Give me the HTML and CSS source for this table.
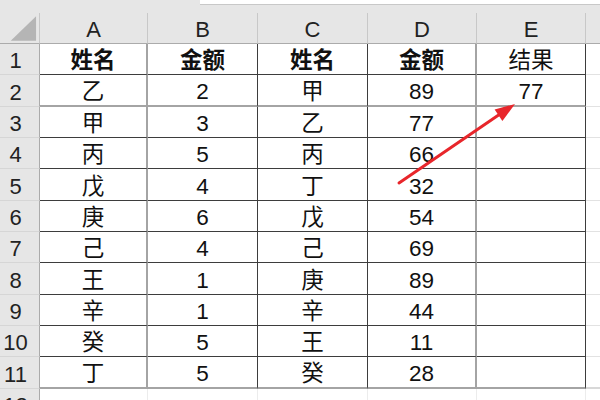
FILE: index.html
```html
<!DOCTYPE html>
<html lang="zh">
<head>
<meta charset="utf-8">
<link rel="stylesheet" href="styles.css">
</head>
<body>
<div class="page">
  <div class="topbar"><div class="formula"></div></div>
  <div class="sheet">
    <div class="corner"><svg width="40" height="31" viewBox="0 0 40 31"><polygon points="37,3 37,28 11,28" fill="#b5b5b5"/></svg></div>
    <div class="ch">A</div><div class="ch">B</div><div class="ch">C</div><div class="ch">D</div><div class="ch">E</div><div class="ch last"></div>

    <div class="rh">1</div><div class="c ca b">姓名</div><div class="c b">金额</div><div class="c b">姓名</div><div class="c cd b">金额</div><div class="c">结果</div><div class="x"></div>
    <div class="rh">2</div><div class="c ca r2">乙</div><div class="c r2">2</div><div class="c r2">甲</div><div class="c cd r2">89</div><div class="c r2">77</div><div class="x"></div>
    <div class="rh">3</div><div class="c ca">甲</div><div class="c">3</div><div class="c">乙</div><div class="c cd">77</div><div class="c"></div><div class="x"></div>
    <div class="rh">4</div><div class="c ca">丙</div><div class="c">5</div><div class="c">丙</div><div class="c cd">66</div><div class="c"></div><div class="x"></div>
    <div class="rh">5</div><div class="c ca">戊</div><div class="c">4</div><div class="c">丁</div><div class="c cd">32</div><div class="c"></div><div class="x"></div>
    <div class="rh">6</div><div class="c ca">庚</div><div class="c">6</div><div class="c">戊</div><div class="c cd">54</div><div class="c"></div><div class="x"></div>
    <div class="rh">7</div><div class="c ca">己</div><div class="c">4</div><div class="c">己</div><div class="c cd">69</div><div class="c"></div><div class="x"></div>
    <div class="rh">8</div><div class="c ca">王</div><div class="c">1</div><div class="c">庚</div><div class="c cd">89</div><div class="c"></div><div class="x"></div>
    <div class="rh">9</div><div class="c ca">辛</div><div class="c">1</div><div class="c">辛</div><div class="c cd">44</div><div class="c"></div><div class="x"></div>
    <div class="rh">10</div><div class="c ca">癸</div><div class="c">5</div><div class="c">王</div><div class="c cd">11</div><div class="c"></div><div class="x"></div>
    <div class="rh">11</div><div class="c ca r11">丁</div><div class="c r11">5</div><div class="c r11">癸</div><div class="c cd r11">28</div><div class="c r11"></div><div class="x r11x"></div>
    <div class="rh">12</div><div class="e"></div><div class="e"></div><div class="e"></div><div class="e"></div><div class="e"></div><div class="e last"></div>
  </div>
  <svg class="arrow" width="600" height="400" viewBox="0 0 600 400">
    <line x1="399" y1="183" x2="503" y2="112" stroke="#e8262b" stroke-width="3" stroke-linecap="round"/>
    <polygon points="515,104 494.6,109.5 502.4,121.1" fill="#e8262b"/>
  </svg>
</div>
</body>
</html>
```

FILE: styles.css
```css
html, body {
  margin: 0;
  padding: 0;
  background: #ffffff;
}
.page {
  position: relative;
  width: 600px;
  height: 400px;
  overflow: hidden;
  font-family: "Liberation Sans", Arial, "Noto Sans CJK SC", sans-serif;
  font-size: 22px;
  line-height: 24px;
  color: #111;
}
.topbar {
  height: 13px;
  background: #e6e6e6;
}
.formula {
  margin-left: 200px;
  height: 4px;
  background: #ffffff;
  border-bottom: 1px solid #c8c8c8;
}
.sheet {
  display: grid;
  grid-template-columns: 40px 108px 110px 110px 109px 109px 1fr;
  grid-template-rows: 31px 31px 32px 31px 31px 32px 31px 31px 32px 31px 31px 32px 31px;
}
.sheet > div {
  box-sizing: border-box;
  display: flex;
  align-items: flex-end;
  justify-content: center;
  padding-bottom: 1px;
  white-space: nowrap;
}
.corner {
  background: #e6e6e6;
  border-right: 1px solid #c8c8c8;
  border-bottom: 1px solid #ababab;
  padding: 0 !important;
  align-items: flex-start !important;
}
.corner svg { display: block; }
.ch {
  background: #e6e6e6;
  border-right: 1px solid #c8c8c8;
  border-bottom: 1px solid #ababab;
  color: #222;
}
.ch.last { border-right: none; }
.rh {
  background: #e6e6e6;
  border-right: 1px solid #ababab;
  border-bottom: 1px solid #d6d6d6;
  padding-right: 8px;
  color: #222;
}
.c {
  border-right: 1px solid #3d3d3d;
  border-bottom: 1px solid #3d3d3d;
  color: #111;
  font-size: 22.5px;
}
.c.ca, .c.cd {
  border-right: 2px solid #a4a4a4;
}
.c.r2 {
  border-bottom: 2px solid #a4a4a4;
}
.c.r11 {
  border-bottom: 2px solid #a4a4a4;
}
.b {
  font-weight: bold;
}
.x {
  border-bottom: 1px solid #e2e2e2;
}
.x.r11x {
  border-bottom: 2px solid #d8d8d8;
}
.e {
  border-right: 1px solid #ececec;
}
.e.last { border-right: none; }
.arrow {
  position: absolute;
  left: 0;
  top: 0;
  pointer-events: none;
}
```
